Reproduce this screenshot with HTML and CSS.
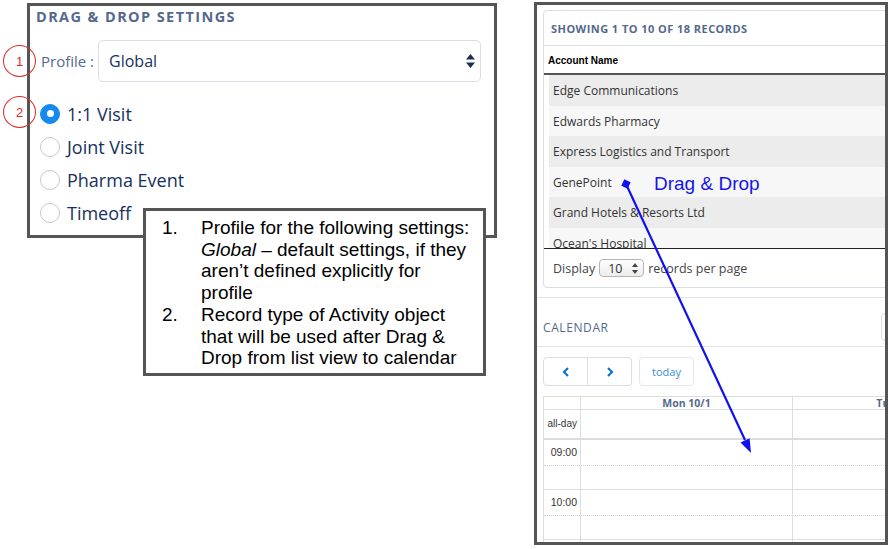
FILE: index.html
```html
<!DOCTYPE html>
<html>
<head>
<meta charset="utf-8">
<link rel="stylesheet" href="styles.css">
</head>
<body>
<div class="page">
  <section class="lpanel">
    <h2 class="ltitle">Drag &amp; Drop Settings</h2>
    <div class="profile-row">
      <span class="plabel">Profile :</span>
      <div class="pselect">
        <span>Global</span>
        <svg width="9" height="14" viewBox="0 0 9 14"><path d="M4.5 0 L9 5.5 H0Z M0 8.5 H9 L4.5 14Z" fill="#16325c"/></svg>
      </div>
    </div>
    <ul class="radios">
      <li><span class="radio on"></span>1:1 Visit</li>
      <li><span class="radio"></span>Joint Visit</li>
      <li><span class="radio"></span>Pharma Event</li>
      <li><span class="radio"></span>Timeoff</li>
    </ul>
  </section>

  <section class="rpanel">
    <div class="card">
      <div class="card-head">Showing 1 to 10 of 18 records</div>
      <div class="col-head">Account Name</div>
      <div class="rows">
        <div class="row">Edge Communications</div>
        <div class="row">Edwards Pharmacy</div>
        <div class="row">Express Logistics and Transport</div>
        <div class="row">GenePoint</div>
        <div class="row">Grand Hotels &amp; Resorts Ltd</div>
        <div class="row">Ocean's Hospital</div>
      </div>
      <div class="list-foot">
        <span>Display</span>
        <span class="mini-select"><span>10</span>
          <svg width="6" height="11" viewBox="0 0 6 11"><path d="M3 0 L6 4 H0Z M0 7 H6 L3 11Z" fill="#444"/></svg>
        </span>
        <span>records per page</span>
      </div>
    </div>

    <div class="cal-head">
      <span class="cal-title">Calendar</span>
      <span class="cal-btn"></span>
    </div>

    <div class="cal-nav">
      <div class="btn-group">
        <span class="nbtn">
          <svg width="8" height="10" viewBox="0 0 8 10"><path d="M6 1 L2 5 L6 9" fill="none" stroke="#0070d2" stroke-width="2"/></svg>
        </span>
        <span class="nbtn">
          <svg width="8" height="10" viewBox="0 0 8 10"><path d="M2 1 L6 5 L2 9" fill="none" stroke="#0070d2" stroke-width="2"/></svg>
        </span>
      </div>
      <span class="today">today</span>
    </div>

    <div class="cal-grid">
      <div class="cg-row cg-head">
        <div class="cg-time"></div>
        <div class="cg-day">Mon 10/1</div>
        <div class="cg-day">Tue 10/2</div>
      </div>
      <div class="cg-row cg-allday">
        <div class="cg-time">all-day</div>
        <div class="cg-day"></div>
        <div class="cg-day"></div>
      </div>
      <div class="cg-row cg-slot">
        <div class="cg-time">09:00</div>
        <div class="cg-day"></div>
        <div class="cg-day"></div>
      </div>
      <div class="cg-row cg-half">
        <div class="cg-time"></div>
        <div class="cg-day"></div>
        <div class="cg-day"></div>
      </div>
      <div class="cg-row cg-slot">
        <div class="cg-time">10:00</div>
        <div class="cg-day"></div>
        <div class="cg-day"></div>
      </div>
      <div class="cg-row cg-half">
        <div class="cg-time"></div>
        <div class="cg-day"></div>
        <div class="cg-day"></div>
      </div>
      <div class="cg-row cg-slot">
        <div class="cg-time"></div>
        <div class="cg-day"></div>
        <div class="cg-day"></div>
      </div>
    </div>
  </section>
</div>

<div class="badge badge-1">1</div>
<div class="badge badge-2">2</div>

<div class="callout">
  <div class="num">1.</div>
  <div class="txt">Profile for the following settings: <em>Global</em> – default settings, if they aren’t defined explicitly for profile</div>
  <div class="num">2.</div>
  <div class="txt">Record type of Activity object that will be used after Drag &amp; Drop from list view to calendar</div>
</div>

<svg class="arrow" width="890" height="549" viewBox="0 0 890 549">
  <line x1="626" y1="184" x2="745" y2="440" stroke="#1010f0" stroke-width="2.2"/>
  <polygon points="751,453 740.5,442.5 749.6,438.2" fill="#1010f0"/>
  <rect x="622.5" y="180.5" width="7" height="7" fill="#1010f0" transform="rotate(25 626 184)"/>
</svg>
<div class="dd-label">Drag &amp; Drop</div>
</body>
</html>
```

FILE: styles.css
```css
html, body {
  margin: 0;
  padding: 0;
  background: #fff;
}
body {
  position: relative;
  width: 890px;
  height: 549px;
  overflow: hidden;
  font-family: "Open Sans", "Noto Sans", sans-serif;
}

.page {
  display: flex;
  align-items: flex-start;
  gap: 37px;
  padding: 2px 0 0 27px;
}

/* ---------- Left panel ---------- */
.lpanel {
  box-sizing: border-box;
  width: 470px;
  height: 235px;
  margin-top: 1px;
  border: 3px solid #555;
  background: #fff;
}
.ltitle {
  margin: 0;
  padding-left: 6px;
  height: 22px;
  line-height: 22px;
  font-size: 14.5px;
  font-weight: 700;
  letter-spacing: 1.4px;
  text-transform: uppercase;
  color: #54698d;
}
.profile-row {
  display: flex;
  align-items: center;
  margin-top: 12px;
  padding-left: 11px;
  gap: 4px;
}
.plabel {
  font-size: 15px;
  color: #54698d;
}
.pselect {
  box-sizing: border-box;
  width: 383px;
  height: 42px;
  border: 1px solid #d8dde6;
  border-radius: 5px;
  display: flex;
  align-items: center;
  justify-content: space-between;
  padding: 0 5px 0 10px;
  font-size: 16px;
  color: #16325c;
}
.radios {
  list-style: none;
  margin: 15px 0 0;
  padding: 0 0 0 10px;
}
.radios li {
  display: flex;
  align-items: center;
  gap: 7px;
  height: 33px;
  font-size: 18px;
  color: #16325c;
}
.radio {
  box-sizing: border-box;
  width: 20px;
  height: 20px;
  border-radius: 50%;
  border: 1px solid #c9c9c9;
  background: #fff;
  display: flex;
  align-items: center;
  justify-content: center;
}
.radio.on {
  background: #1589ee;
  border-color: #1589ee;
}
.radio.on::after {
  content: "";
  width: 7px;
  height: 7px;
  border-radius: 50%;
  background: #fff;
}

/* ---------- Right panel ---------- */
.rpanel {
  box-sizing: border-box;
  width: 354px;
  height: 543px;
  border: 3px solid #555;
  overflow: hidden;
  background: #fff;
}
.card {
  width: 400px;
  margin: 5px 0 0 6px;
  border: 1px solid #d8dde6;
  border-radius: 4px;
}
.card-head {
  height: 34px;
  display: flex;
  align-items: center;
  padding-left: 7px;
  border-bottom: 1px solid #d8dde6;
  font-size: 11px;
  font-weight: 700;
  letter-spacing: 0.45px;
  text-transform: uppercase;
  color: #54698d;
}
.col-head {
  height: 27px;
  line-height: 30px;
  padding-left: 4px;
  border-bottom: 2px solid #555;
  font-family: "Liberation Sans", Arial, sans-serif;
  font-size: 10px;
  font-weight: 700;
  color: #000;
}
.rows {
  height: 173px;
  overflow: hidden;
  margin-left: 5px;
}
.row {
  box-sizing: border-box;
  height: 30.5px;
  line-height: 31px;
  padding-left: 4px;
  font-size: 12px;
  color: #333;
  background: #ececec;
}
.row:nth-child(even) {
  background: #f7f7f7;
}
.list-foot {
  height: 38px;
  border-top: 1px solid #222;
  display: flex;
  align-items: center;
  gap: 4px;
  padding-left: 9px;
  font-size: 12.5px;
  color: #444;
}
.mini-select {
  box-sizing: border-box;
  width: 45px;
  height: 18px;
  border: 1px solid #b5b5b5;
  border-radius: 4px;
  background: linear-gradient(#fdfdfd, #ededed);
  display: flex;
  align-items: center;
  justify-content: space-between;
  padding: 0 5px 0 8px;
  font-size: 12.5px;
  color: #333;
}

.cal-head {
  box-sizing: border-box;
  width: 420px;
  height: 50px;
  margin-top: 9px;
  padding-top: 10px;
  border-top: 1px solid #e1e5ea;
  border-bottom: 1px solid #e1e5ea;
  display: flex;
  align-items: center;
  justify-content: space-between;
  padding-left: 6px;
}
.cal-title {
  font-size: 12px;
  letter-spacing: 0.6px;
  text-transform: uppercase;
  color: #54698d;
}
.cal-btn {
  box-sizing: border-box;
  width: 76px;
  height: 28px;
  border: 1px solid #d8dde6;
  border-radius: 4px;
}
.cal-nav {
  display: flex;
  align-items: center;
  gap: 7px;
  margin: 10px 0 0 6px;
}
.btn-group {
  display: flex;
}
.nbtn {
  box-sizing: border-box;
  width: 45px;
  height: 29px;
  border: 1px solid #d8dde6;
  display: flex;
  align-items: center;
  justify-content: center;
}
.nbtn:first-child {
  border-radius: 4px 0 0 4px;
}
.nbtn:last-child {
  border-left: none;
  width: 44px;
  border-radius: 0 4px 4px 0;
}
.today {
  box-sizing: border-box;
  width: 55px;
  height: 29px;
  border: 1px solid #e3e7ee;
  border-radius: 4px;
  display: flex;
  align-items: center;
  justify-content: center;
  font-size: 11px;
  color: #3a8ad6;
}

.cal-grid {
  width: 500px;
  margin: 10px 0 0 6px;
  border-top: 1px solid #ddd;
  border-left: 1px solid #ddd;
}
.cg-row {
  display: grid;
  grid-template-columns: 37px 212px 212px;
  border-bottom: 1px solid #ddd;
}
.cg-row > div {
  border-right: 1px solid #ddd;
}
.cg-head {
  height: 12px;
}
.cg-head .cg-day {
  font-size: 10.5px;
  line-height: 12px;
  font-weight: 700;
  text-align: center;
  color: #54698d;
}
.cg-allday {
  height: 28px;
  border-bottom: 2px solid #dcdcdc;
}
.cg-time {
  box-sizing: border-box;
  text-align: right;
  padding-right: 3px;
  font-family: "Liberation Sans", Arial, sans-serif;
  font-size: 10.5px;
  color: #333;
}
.cg-allday .cg-time {
  font-size: 10px;
  line-height: 28px;
}
.cg-slot {
  height: 25px;
  border-bottom: 1px dotted #cfcfcf;
}
.cg-slot .cg-time {
  line-height: 24px;
}
.cg-half {
  height: 23px;
}

/* ---------- Overlays ---------- */
.badge {
  position: absolute;
  left: 3px;
  box-sizing: border-box;
  width: 33px;
  height: 32px;
  border: 1px solid #e02a2a;
  border-radius: 50%;
  display: flex;
  align-items: center;
  justify-content: center;
  font-family: "Liberation Sans", Arial, sans-serif;
  font-size: 13px;
  color: #e02a2a;
}
.badge-1 { top: 45px; }
.badge-2 { top: 96px; }

.callout {
  position: absolute;
  left: 143px;
  top: 208px;
  box-sizing: border-box;
  width: 343px;
  border: 3px solid #555;
  background: #fff;
  padding: 6px 9px 4px 16px;
  display: grid;
  grid-template-columns: 39px 273px;
  font-family: "Liberation Sans", Arial, sans-serif;
  font-size: 19px;
  line-height: 21.7px;
  color: #000;
}

.arrow {
  position: absolute;
  left: 0;
  top: 0;
  pointer-events: none;
}
.dd-label {
  position: absolute;
  left: 654px;
  top: 173px;
  font-family: "Liberation Sans", Arial, sans-serif;
  font-size: 19px;
  line-height: 22px;
  color: #1414f0;
}
```
